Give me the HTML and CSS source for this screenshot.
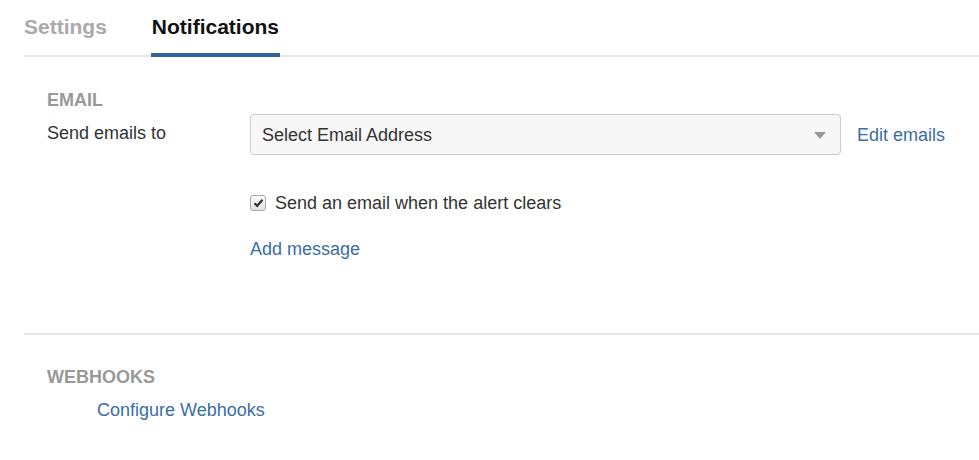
FILE: index.html
```html
<!DOCTYPE html>
<html>
<head>
<meta charset="utf-8">
<link rel="stylesheet" href="styles.css">
</head>
<body>
<div class="page">
  <nav class="tabs">
    <a class="tab">Settings</a>
    <a class="tab active">Notifications</a>
  </nav>
  <section class="section email">
    <h3 class="section-title">EMAIL</h3>
    <div class="row">
      <label class="row-label">Send emails to</label>
      <div class="row-body">
        <div class="field-line">
          <div class="select">
            <span>Select Email Address</span>
            <span class="caret"></span>
          </div>
          <a class="link edit">Edit emails</a>
        </div>
        <label class="check">
          <span class="box"><svg width="11" height="10" viewBox="0 0 11 10"><path d="M1.5 5.2 L4.2 7.8 L9.5 1.8" fill="none" stroke="#333" stroke-width="2.2"/></svg></span>
          <span>Send an email when the alert clears</span>
        </label>
        <a class="link add">Add message</a>
      </div>
    </div>
  </section>
  <section class="section webhooks">
    <h3 class="section-title">WEBHOOKS</h3>
    <a class="link hook">Configure Webhooks</a>
  </section>
</div>
</body>
</html>
```

FILE: styles.css
```css
* { box-sizing: border-box; }
body {
  margin: 0;
  font-family: "Liberation Sans", Arial, sans-serif;
  font-size: 18px;
  line-height: 20px;
  color: #333;
  background: #fff;
}
.page {
  padding-left: 24px;
}
.tabs {
  display: flex;
  gap: 44px;
  border-bottom: 2px solid #e8e8e8;
  height: 57px;
}
.tab {
  font-size: 21px;
  line-height: 24px;
  font-weight: bold;
  color: #aaa;
  padding-top: 15px;
  height: 57px;
  margin-bottom: -2px;
}
.tab.active {
  color: #111;
  border-bottom: 4px solid #2f6599;
  padding: 15px 1px 0;
}
.section {
  padding-left: 23px;
}
.email {
  padding-top: 33px;
  padding-bottom: 74px;
  border-bottom: 2px solid #e8e8e8;
}
.section-title {
  margin: 0;
  font-size: 18px;
  font-weight: bold;
  color: #999;
  line-height: 20px;
}
.row {
  display: flex;
  margin-top: 4px;
}
.row-label {
  width: 203px;
  padding-top: 9px;
}
.row-body {
  display: flex;
  flex-direction: column;
  align-items: flex-start;
}
.field-line {
  display: flex;
  align-items: center;
  gap: 16px;
}
.select {
  width: 591px;
  height: 41px;
  border: 1px solid #ccc;
  border-radius: 4px;
  background: #f7f7f7;
  display: flex;
  align-items: center;
  justify-content: space-between;
  padding: 0 14px 0 11px;
}
.caret {
  width: 0;
  height: 0;
  border-left: 6.5px solid transparent;
  border-right: 6.5px solid transparent;
  border-top: 7px solid #999;
  margin-top: 1px;
}
.link {
  color: #3a6ea5;
}
.check {
  display: flex;
  align-items: center;
  gap: 9px;
  margin-top: 38px;
}
.box {
  width: 16px;
  height: 16px;
  border: 1px solid #aaa;
  border-radius: 3px;
  background: linear-gradient(#fbfbfb, #e2e2e2);
  display: flex;
  align-items: center;
  justify-content: center;
}
.add {
  margin-top: 26px;
}
.webhooks {
  padding-top: 32px;
}
.hook {
  display: block;
  margin-top: 13px;
  margin-left: 50px;
}
```
